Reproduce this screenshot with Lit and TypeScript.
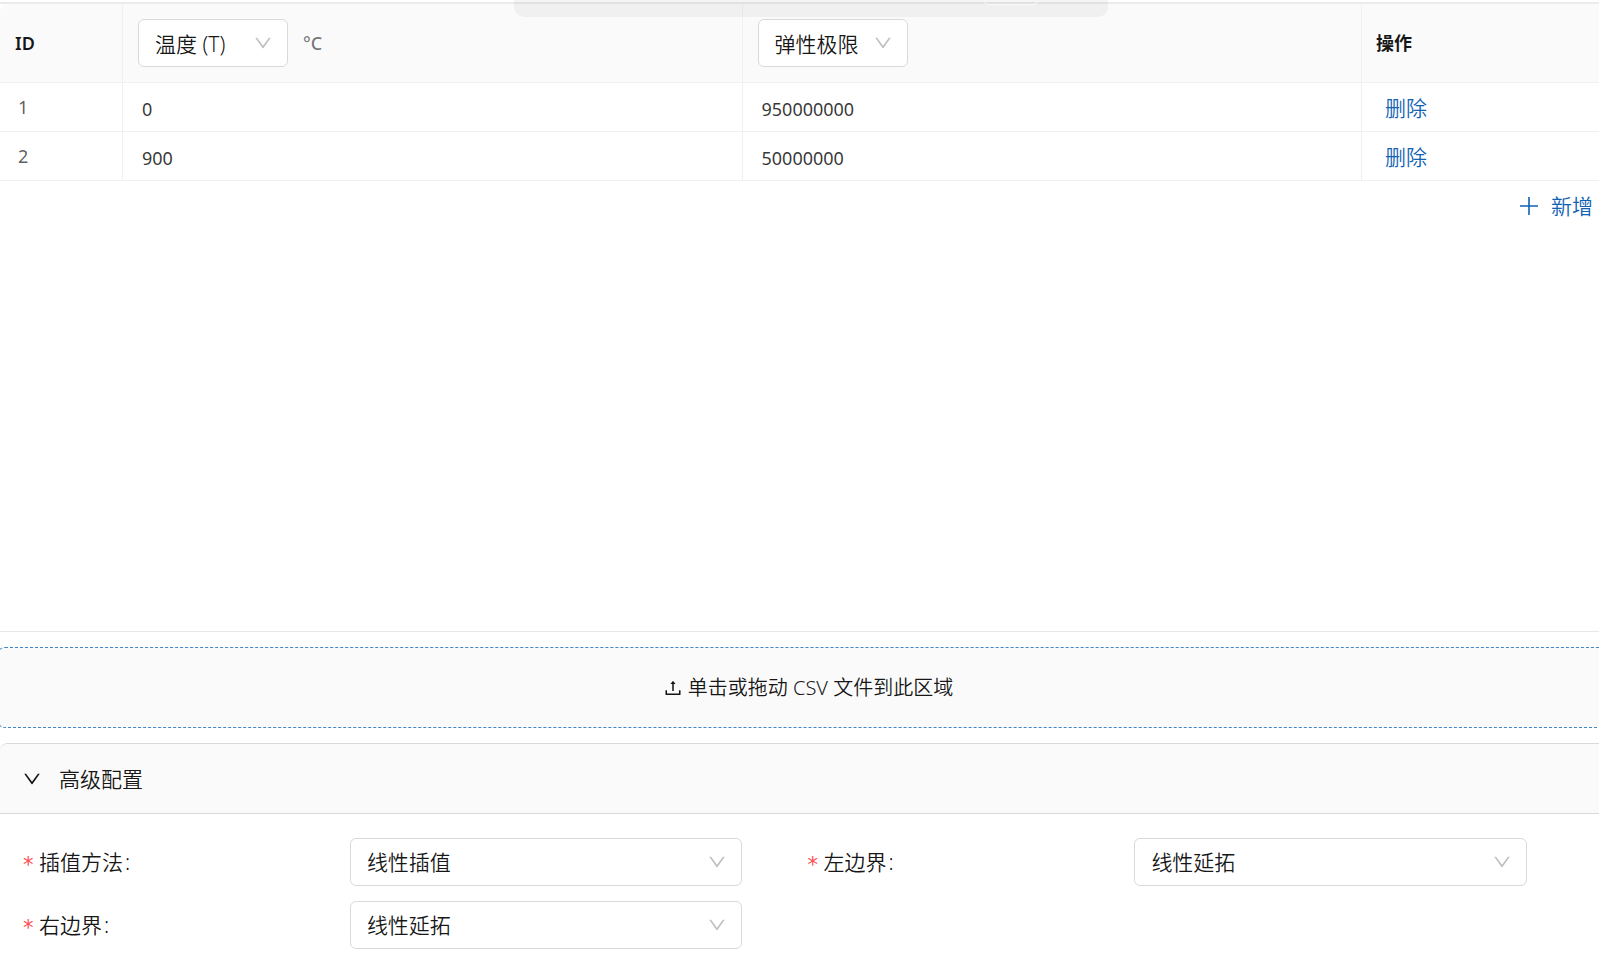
import { LitElement, html, css, svg } from "lit";
import { customElement, property, state } from "lit/decorators.js";

const DOWN =
  "M884 256h-75c-5.100 0-9.900 2.500-12.900 6.600L512 654.200 227.900 262.600c-3-4.100-7.800-6.600-12.900-6.600h-75c-6.500 0-10.300 7.400-6.500 12.700l352.600 486.100c12.800 17.600 39 17.600 51.700 0l352.600-486.100c3.900-5.300.1-12.700-6.400-12.700z";
const UPLOAD =
  "M400 317.700h73.900V656c0 4.400 3.600 8 8 8h60c4.400 0 8-3.600 8-8V317.700H624c6.700 0 10.400-7.700 6.300-12.900L518.300 163a8 8 0 00-12.600 0l-112 141.700c-4.100 5.300-.4 13 6.300 13zM878 626h-60c-4.400 0-8 3.600-8 8v154H214V634c0-4.400-3.600-8-8-8h-60c-4.400 0-8 3.600-8 8v198c0 17.700 14.300 32 32 32h684c17.700 0 32-14.300 32-32V634c0-4.400-3.600-8-8-8z";

const icon = (d: string) =>
  html`<svg viewBox="64 64 896 896" aria-hidden="true">${svg`<path d=${d} fill="currentColor"></path>`}</svg>`;

const base = css`
  * {
    box-sizing: border-box;
  }
  button,
  input,
  select {
    margin: 0;
    font: inherit;
    color: inherit;
  }
  svg {
    display: block;
    width: 18px;
    height: 18px;
  }
`;

@customElement("select-box")
class SelectBox extends LitElement {
  @property() label = "";
  @property({ attribute: false }) options: string[] = [];

  static styles = [
    base,
    css`
      :host {
        display: block;
        font-weight: 350;
      }
      .box {
        display: grid;
        align-items: center;
      }
      .field {
        grid-area: 1 / 1;
        appearance: none;
        width: 100%;
        height: 48px;
        padding: var(--text-drop, 0) 40px 0 16px;
        border: 1px solid #d9d9d9;
        border-radius: 6px;
        background: #fff;
        font-size: 21px;
      }
      .arrow {
        grid-area: 1 / 1;
        justify-self: end;
        margin-right: 16px;
        color: #bfbfbf;
        pointer-events: none;
      }
    `,
  ];

  render() {
    return html`<div class="box">
      <select class="field" aria-label=${this.label}>
        ${this.options.map((o) => html`<option>${o}</option>`)}
      </select>
      <span class="arrow">${icon(DOWN)}</span>
    </div>`;
  }
}

@customElement("app-root")
class AppRoot extends LitElement {
  @state() private rows = [
    ["0", "950000000"],
    ["900", "50000000"],
  ];
  @state() private open = true;

  static styles = [
    base,
    css`
      :host {
        display: flex;
        flex-direction: column;
        min-height: 100vh;
        overflow-x: clip;
        background: #fff;
        color: rgba(0, 0, 0, 0.92);
        font: 18px/28px "Noto Sans", "Noto Sans CJK SC", sans-serif;
      }
      .floating {
        position: absolute;
        top: 0;
        left: 50%;
        display: flex;
        justify-content: flex-end;
        width: 594px;
        height: 17px;
        padding-right: 70px;
        margin-left: -286px;
        border-radius: 0 0 10px 10px;
        background: rgba(0, 0, 0, 0.04);
        pointer-events: none;
      }
      .tab {
        width: 54px;
        height: 5px;
        border: 1px solid #fafafa;
        border-top: 0;
        border-radius: 0 0 5px 5px;
      }
      .sheet {
        flex: 1;
        min-height: 630px;
        margin-top: 2px;
        border-top: 2px solid #ebebeb;
        border-bottom: 1px solid #e8e8e8;
      }
      .table {
        width: 100%;
        table-layout: fixed;
        border-collapse: separate;
        border-spacing: 0;
      }
      .table th,
      .table td {
        padding: 0 14px;
        border-right: 1px solid #f0f0f0;
        border-bottom: 1px solid #f0f0f0;
        text-align: left;
      }
      .table th:last-child,
      .table td:last-child {
        border-right: 0;
      }
      .table th {
        height: 79px;
        background: #fafafa;
        font-weight: 600;
      }
      .table th:first-child {
        padding-left: 15px;
        border-top-left-radius: 8px;
      }
      .table td {
        height: 49px;
      }
      .table .index {
        padding: 0 18px;
        color: rgba(0, 0, 0, 0.65);
      }
      .table .cell {
        padding: 0 4px;
      }
      .id-col {
        width: 123px;
      }
      .action-col {
        width: 237px;
      }
      .head {
        display: flex;
        align-items: center;
        gap: 15px;
        margin-left: 1px;
      }
      .head select-box {
        width: 150px;
        --text-drop: 2px;
      }
      .unit {
        color: rgba(0, 0, 0, 0.55);
        font-weight: 500;
      }
      .value {
        display: block;
        width: 100%;
        height: 40px;
        padding: 4px 15px 0;
        border: 0;
        background: transparent;
        outline: 0;
        color: rgba(0, 0, 0, 0.8);
      }
      .link {
        display: flex;
        align-items: center;
        gap: 13px;
        height: 48px;
        padding: 2px 9px 0;
        border: 0;
        background: none;
        color: #1062b4;
        font-size: 21px;
        font-weight: 350;
        cursor: pointer;
      }
      .add {
        margin-left: auto;
        padding-right: 6px;
      }
      .plus {
        stroke: currentColor;
        stroke-width: 1.6;
      }
      .upload {
        display: flex;
        align-items: center;
        justify-content: center;
        gap: 6px;
        height: 81px;
        margin: 15px -8px 15px -3px;
        padding-left: 13px;
        border: 1px dashed #3f87c6;
        border-radius: 8px;
        background: #fafafa;
        font-size: 20px;
        font-weight: 350;
        cursor: pointer;
      }
      .panel {
        border: 1px solid #d9d9d9;
        border-width: 1px 0 0;
        border-radius: 8px 0 0 0;
      }
      .toggle {
        display: flex;
        align-items: center;
        gap: 18px;
        width: 100%;
        height: 70px;
        padding: 0 23px;
        border: 0;
        border-bottom: 1px solid #d9d9d9;
        border-radius: 8px 0 0 0;
        background: #fafafa;
        font-size: 21px;
        font-weight: 350;
        text-align: left;
        cursor: pointer;
      }
      .form {
        display: grid;
        grid-template-columns: 1fr 1fr;
        row-gap: 15px;
        padding: 24px 7px 5px 23px;
      }
      .item {
        display: grid;
        grid-template-columns: 5fr 6fr 1fr;
        align-items: center;
      }
      .label {
        display: flex;
        align-items: center;
        gap: 5px;
        font-size: 21px;
        font-weight: 350;
      }
      .star {
        width: 11px;
        padding-top: 5px;
        color: #ff4d4f;
        font-family: "DejaVu Sans", sans-serif;
        font-size: 21px;
        font-weight: 400;
      }
      .colon {
        margin-left: 2px;
      }
    `,
  ];

  private item(label: string, value: string) {
    return html`<div class="item">
      <span class="label"
        ><span class="star">*</span><span>${label}<span class="colon">:</span></span></span
      >
      <select-box .label=${label} .options=${[value]}></select-box>
    </div>`;
  }

  private remove(index: number) {
    this.rows = this.rows.filter((_, i) => i !== index);
  }

  render() {
    return html`
      <section class="sheet">
        <table class="table">
          <thead>
            <tr>
              <th class="id-col">ID</th>
              <th>
                <div class="head">
                  <select-box label="温度" .options=${["温度 (T)"]}></select-box>
                  <span class="unit">°C</span>
                </div>
              </th>
              <th>
                <div class="head">
                  <select-box label="弹性极限" .options=${["弹性极限"]}></select-box>
                </div>
              </th>
              <th class="action-col">操作</th>
            </tr>
          </thead>
          <tbody>
            ${this.rows.map(
              (row, i) => html`<tr>
                <td class="index">${i + 1}</td>
                ${row.map(
                  (v) => html`<td class="cell">
                    <input class="value" type="text" aria-label="数值" .value=${v} />
                  </td>`
                )}
                <td><button class="link" @click=${() => this.remove(i)}>删除</button></td>
              </tr>`
            )}
          </tbody>
        </table>
        <button class="link add" @click=${() => (this.rows = [...this.rows, ["", ""]])}>
          <svg class="plus" viewBox="0 0 18 18" aria-hidden="true"><path d="M9 0v18M0 9h18"></path></svg>
          新增
        </button>
      </section>
      <label class="upload">
        ${icon(UPLOAD)}
        <span>单击或拖动 CSV 文件到此区域</span>
        <input type="file" accept=".csv" hidden />
      </label>
      <section class="panel">
        <button class="toggle" aria-expanded=${this.open} @click=${() => (this.open = !this.open)}>
          ${icon(DOWN)}<span>高级配置</span>
        </button>
        ${this.open
          ? html`<div class="form">
              ${this.item("插值方法", "线性插值")} ${this.item("左边界", "线性延拓")}
              ${this.item("右边界", "线性延拓")}
            </div>`
          : null}
      </section>
      <div class="floating"><span class="tab"></span></div>
    `;
  }
}
